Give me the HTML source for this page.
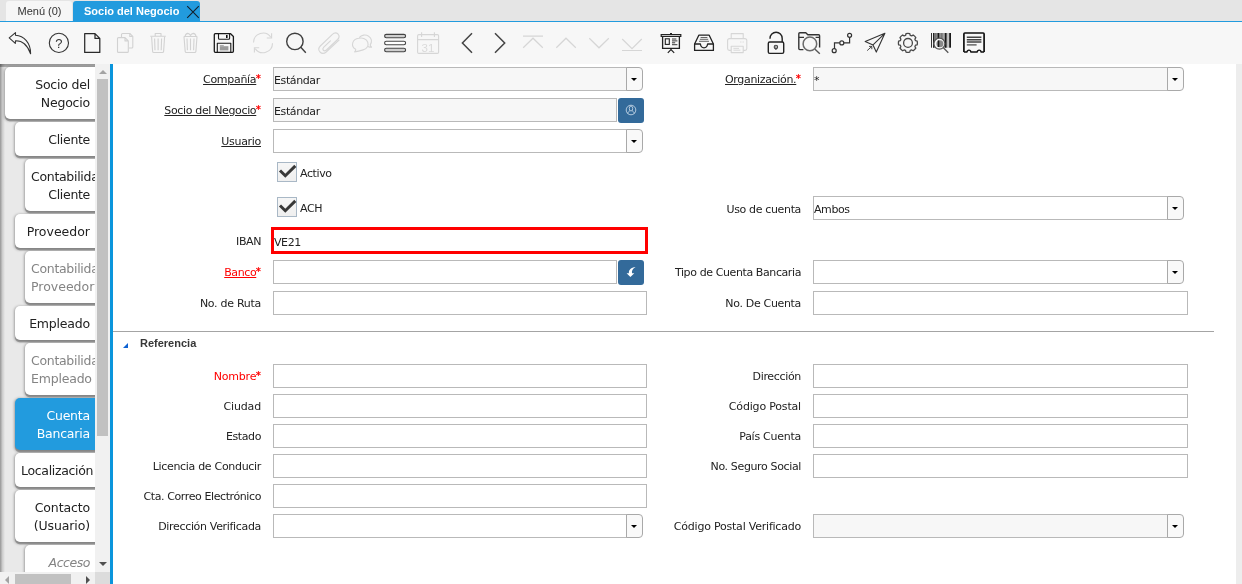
<!DOCTYPE html>
<html lang="es">
<head>
<meta charset="utf-8">
<title>Socio del Negocio</title>
<style>
html,body{margin:0;padding:0;}
body{width:1242px;height:584px;overflow:hidden;position:relative;background:#fff;font-family:"Liberation Sans",sans-serif;font-size:12px;color:#222;}
.abs{position:absolute;}
#form,#side,.tab,#tbsvg{will-change:transform;}
/* tab bar */
#tabbar{position:absolute;left:0;top:0;width:1242px;height:21px;background:#e5e5e5;}
#tabline{position:absolute;left:0;top:21px;width:1242px;height:1px;background:#229bde;}
.tab{position:absolute;top:1px;height:20px;line-height:21px;font-size:11px;border-radius:3px 3px 0 0;white-space:nowrap;}
#tab1{left:6px;width:66px;background:#f6f6f6;color:#333;}
#tab1 span{position:absolute;left:11.5px;top:0;}
#tab2{left:73px;width:127px;background:#229bde;color:#fff;font-weight:bold;}
#tab2 span{position:absolute;left:11px;top:0;}
#tab2 svg{position:absolute;left:113px;top:4px;}
/* toolbar */
#toolbar{position:absolute;left:0;top:22px;width:1242px;height:42px;background:#f7f7f7;}
.ic{position:absolute;top:8px;width:26px;height:26px;}
/* sidebar */
#side{position:absolute;left:0;top:64px;width:110px;height:520px;background:#e9e9e9;overflow:hidden;}
#vline{position:absolute;left:110px;top:64px;width:3px;height:520px;background:#0a95dc;}
.st{position:absolute;background:#fff;border-radius:5px 0 0 5px;font-family:"DejaVu Sans","Liberation Sans",sans-serif;font-size:12.5px;letter-spacing:-0.2px;line-height:18px;color:#222;white-space:nowrap;box-shadow:0 1px 2.5px 0.5px rgba(0,0,0,.3),0 2.5px 0.5px rgba(0,0,0,.2);}
.stx{position:absolute;left:6px;top:9px;}
.ln{text-align:right;white-space:nowrap;}
.ln.la{text-align:left;}
.sinset{position:absolute;left:0;top:0;width:95px;height:520px;background:linear-gradient(to bottom,rgba(0,0,0,.36),rgba(0,0,0,.28) 2.5px,rgba(0,0,0,0) 3.5px) top left/95px 4px no-repeat,linear-gradient(to right,rgba(0,0,0,.36),rgba(0,0,0,.12) 2.5px,rgba(0,0,0,0) 5px) top left/5px 520px no-repeat;pointer-events:none;}
.sbv{position:absolute;left:95px;top:0;width:15px;height:508px;background:#f1f1f1;}
.sbvt{position:absolute;left:97px;top:15px;width:11px;height:357px;background:#c1c1c1;}
.sbh{position:absolute;left:0;top:508px;width:95px;height:15px;background:#f1f1f1;}
.sbht{position:absolute;left:15px;top:510px;width:56px;height:11px;background:#c1c1c1;}
.sbc{position:absolute;left:95px;top:508px;width:15px;height:15px;background:#dcdcdc;}
.arr{position:absolute;width:0;height:0;border:4px solid transparent;}
.arr.up{left:98.5px;top:6px;border-bottom:4px solid #a3a3a3;border-top:0;}
.arr.dn{left:98.5px;top:498px;border-top:4px solid #505050;border-bottom:0;}
.arr.lf{left:5px;top:511.5px;border-right:4px solid #a3a3a3;border-left:0;}
.arr.rt{left:86px;top:511.5px;border-left:4px solid #505050;border-right:0;}
#rstrip{position:absolute;left:1236px;top:64px;width:6px;height:520px;background:#ededed;}
/* form */
.lbl{position:absolute;left:113px;width:148px;text-align:right;white-space:nowrap;font-family:"DejaVu Sans","Liberation Sans",sans-serif;font-size:11px;letter-spacing:-0.4px;line-height:16px;color:#222;}
.lbl.r{left:653px;}
.lbl u{text-decoration:underline;}
.req{color:#f00;font-weight:bold;font-size:10px;line-height:0;letter-spacing:0;position:relative;top:-1px;margin-left:-0.5px;}
.inp{position:absolute;box-sizing:border-box;height:24px;border:1px solid #b9b9b9;background:#fff;font-family:"DejaVu Sans","Liberation Sans",sans-serif;font-size:11px;letter-spacing:-0.4px;line-height:22px;padding-top:2px;padding-left:0;color:#222;white-space:nowrap;}
.ro{background:#f7f7f7;}
.cbb{position:absolute;box-sizing:border-box;width:17px;height:24px;border:1px solid #a9a9a9;border-radius:0 4px 4px 0;background:#f9f9f9;}
.btn{position:absolute;width:26px;height:25px;background:#336a9a;border-radius:3px;}
.btn svg{display:block;}
.chk{position:absolute;box-sizing:border-box;width:20px;height:20px;border:1px solid #a9b8c6;background:linear-gradient(#f6f6f6,#efefef);}
.chk svg{position:absolute;left:-1px;top:-1px;}
.ctx{position:absolute;font-family:"DejaVu Sans","Liberation Sans",sans-serif;font-size:11px;letter-spacing:-0.4px;line-height:16px;color:#222;white-space:nowrap;}
.iban{position:absolute;box-sizing:border-box;border:3px solid #ff0000;background:#fff;font-family:"DejaVu Sans","Liberation Sans",sans-serif;font-size:11px;letter-spacing:-0.4px;line-height:21px;padding-top:2px;color:#222;}
.sep{position:absolute;height:1px;background:#a4a4a4;}
.tri{position:absolute;width:0;height:0;border-left:5px solid transparent;border-bottom:5px solid #0f62d2;}
.grp{position:absolute;font-family:"Liberation Sans",sans-serif;font-weight:bold;font-size:11px;line-height:14px;color:#373737;}
.cbb:after{content:"";position:absolute;left:4px;top:10px;border:3px solid transparent;border-top:3px solid #000;border-bottom:0;}
</style>
</head>
<body>
<div id="tabbar"></div>
<div id="tabline"></div>
<div class="tab" id="tab1"><span>Menú (0)</span></div>
<div class="tab" id="tab2"><span>Socio del Negocio</span><svg width="14" height="14" viewBox="0 0 14 14"><path d="M1.2 1.2 L12.8 12.8 M12.8 1.2 L1.2 12.8" stroke="#13202b" stroke-width="1.1" fill="none"/></svg></div>
<div id="toolbar"></div><!--/toolbar-->
<!--tbsvg--><svg id="tbsvg" width="1000" height="64" viewBox="0 0 1000 64" style="position:absolute;left:0;top:0;" fill="none" stroke-linecap="butt" stroke-linejoin="miter">
<!-- 1 undo -->
<path d="M15.5 32.6 L9.2 37.9 L15.3 43.4 L15.5 40.8 C22 40.6 27.5 45 30.6 53.8 C30.8 43 24 35.5 15.5 35.2 Z" stroke="#333" stroke-width="1.1" stroke-linejoin="round"/>
<!-- 2 help -->
<circle cx="58.9" cy="42.9" r="9.6" stroke="#333" stroke-width="1.1"/>
<text x="58.9" y="47.6" font-family="Liberation Sans, sans-serif" font-size="13" text-anchor="middle" fill="#333" stroke="none">?</text>
<!-- 3 new -->
<path d="M84.7 33.6 H95 L99.8 38.4 V52.4 H84.7 Z M95 33.6 V38.4 H99.8" stroke="#2a2a2a" stroke-width="1.25" stroke-linejoin="round"/>
<!-- 4 copy (disabled) -->
<g stroke="#d2d2d2" stroke-width="1.1" stroke-linejoin="round">
<path d="M121.5 37 V34.5 Q121.5 33.5 122.5 33.5 H129.8 L132.8 36.5 V47 Q132.8 48 131.8 48 H129"/>
<path d="M129.8 33.5 V36.5 H132.8"/>
<path d="M117.5 38.6 Q117.5 37.6 118.5 37.6 H125 L128.3 40.9 V51.4 Q128.3 52.4 127.3 52.4 H118.5 Q117.5 52.4 117.5 51.4 Z M125 37.6 V40.9 H128.3"/>
</g>
<!-- 5 delete (disabled) -->
<g stroke="#d2d2d2" stroke-width="1.1" stroke-linejoin="round">
<path d="M150.3 36.3 H165.8 M155.2 36.3 V33.5 H161 V36.3"/>
<path d="M151.6 36.8 L152.6 51.4 Q152.7 52.5 153.8 52.5 H162.4 Q163.5 52.5 163.6 51.4 L164.6 36.8"/>
<path d="M154.6 38.5 L155 50.3 M158.1 38.5 V50.3 M161.6 38.5 L161.2 50.3"/>
</g>
<!-- 6 delete selection (disabled) -->
<g stroke="#d2d2d2" stroke-width="1.1" stroke-linejoin="round">
<path d="M184 36.8 L185.2 51.4 Q185.3 52.5 186.4 52.5 H194.7 Q195.8 52.5 195.9 51.4 L197 36.8"/>
<path d="M183.8 36.5 H197.2 M185 36.5 Q185.6 33.4 187.8 33.4 Q189.4 33.6 190.5 35.4 Q191.6 33.6 193.2 33.4 Q195.6 33.4 196 36.5"/>
<path d="M187 38.5 L187.4 50.3 M190.5 38.5 V50.3 M194 38.5 L193.6 50.3"/>
</g>
<!-- 7 save -->
<g stroke="#1a1a1a" stroke-width="1.3" stroke-linejoin="round">
<path d="M215.3 33.7 H230.6 L233.4 36.5 V51.3 Q233.4 52.4 232.3 52.4 H215.3 Q214.3 52.4 214.3 51.3 V34.7 Q214.3 33.7 215.3 33.7 Z"/>
<path d="M218.5 33.7 V38.3 Q218.5 39.3 219.5 39.3 H228.6 Q229.6 39.3 229.6 38.3 V33.7" stroke-width="1.1"/>
<path d="M217.3 52.4 V43.3 H230.8 V52.4" stroke-width="1.1"/>
</g>
<rect x="226" y="35" width="1.6" height="3" fill="#111"/>
<rect x="219.8" y="46.2" width="8.6" height="4.2" fill="#9a9a9a"/>
<rect x="219.8" y="45.2" width="4" height="1" fill="#9a9a9a"/>
<!-- 8 refresh (disabled) -->
<g stroke="#d6d6d6" stroke-width="1.1">
<path d="M253.5 42.5 A9.5 9.5 0 0 1 270.8 37.2"/>
<path d="M272.5 43.3 A9.5 9.5 0 0 1 255.2 48.6"/>
<path d="M271.6 33.2 V38 H266.8"/>
<path d="M254.4 52.6 V47.8 H259.2"/>
</g>
<!-- 9 find -->
<circle cx="294.9" cy="41.4" r="8.2" stroke="#404040" stroke-width="1.4"/>
<path d="M300.8 47.2 L305.8 52.8" stroke="#404040" stroke-width="1.4"/>
<!-- 10 attachment (disabled) -->
<g stroke="#d6d6d6" stroke-width="1.1" stroke-linecap="round">
<path d="M339 40.2 L326.2 52 Q322.8 54.8 320 52 Q317.3 49 320.3 46 L332.4 34.4 Q335.4 31.4 338 34 Q340.4 36.6 337.6 39.5 L326.4 50 Q324.4 51.6 323.2 50.2 Q322.2 48.8 323.8 47.2 L330.4 40.8"/>
</g>
<!-- 11 chat (disabled) -->
<g stroke="#d6d6d6" stroke-width="1.1" stroke-linejoin="round">
<path d="M358.6 38 A7 6 0 1 1 362.8 49.6 Q358 51 354.3 51.6 Q355.6 50.4 355.4 49 A7 6 0 0 1 358.6 38 Z" transform="translate(0.3,0.3)"/>
<path d="M359.2 37.6 A6.6 6 0 1 1 370.2 44.8 Q370.4 46.2 371.6 47.2 Q369.6 47.2 368 46.4"/>
</g>
<!-- 12 toggle/list -->
<g stroke="#444" stroke-width="1.1">
<rect x="384.6" y="34.4" width="21" height="3.4" rx="1.7" fill="#cfcfcf"/>
<rect x="384.6" y="41.3" width="21" height="3.4" rx="1.7" fill="#fff"/>
<rect x="384.6" y="48.3" width="21" height="3.4" rx="1.7" fill="#cfcfcf"/>
</g>
<!-- 13 calendar (disabled) -->
<g stroke="#d6d6d6" stroke-width="1.1">
<rect x="417.6" y="34.6" width="21" height="18.8" rx="1.2"/>
<path d="M417.6 39.6 H438.6 M421.6 32.2 V37 M434.4 32.2 V37"/>
</g>
<text x="428" y="51.6" font-family="Liberation Sans, sans-serif" font-size="11.5" text-anchor="middle" fill="#dadada" stroke="none">31</text>
<!-- 14,15 prev/next -->
<path d="M472 33.3 L462.4 43 L472 52.8" stroke="#444" stroke-width="1.5"/>
<path d="M495 33.3 L504.7 43 L495 52.8" stroke="#444" stroke-width="1.5"/>
<!-- 16-19 first/up/down/last (disabled) -->
<g stroke="#d6d6d6" stroke-width="1.2">
<path d="M523 36.2 H543 M523.2 47.8 L533 38.2 L542.8 47.8"/>
<path d="M556.3 47.8 L566 38.2 L575.8 47.8"/>
<path d="M589.3 38.2 L599 47.8 L608.8 38.2"/>
<path d="M622.2 39 L632 48.6 L641.8 39 M622 50.5 H642"/>
</g>
<!-- 20 report (presentation) -->
<g stroke="#222" stroke-width="1.2">
<path d="M661.2 34.6 H680.8 M661.2 36.5 H680.8 M661.2 34 V37 M680.8 34 V37"/>
<path d="M662.6 36.5 V48.3 H679.4 V36.5" stroke-width="1.3"/>
<path d="M671 48.3 V50 M667.8 52.8 L671 49.6 L674.2 52.8"/>
<rect x="665.3" y="38.8" width="4" height="5.6" stroke-width="1.1"/>
<path d="M672 39 H676.4 M672 40.9 H677.4 M672 42.8 H675.2 M672 44.7 H677.4" stroke-width="0.9"/>
<path d="M670 33.6 H672" stroke-width="1.2"/>
</g>
<!-- 21 archive / inbox -->
<g stroke="#222" stroke-width="1.3" stroke-linejoin="round">
<path d="M694.6 44 L698.8 35.2 H709.2 L713.4 44"/>
<path d="M694.6 44 H700.4 Q701 47.8 704 47.8 Q707 47.8 707.6 44 H713.4 V50.4 H694.6 Z"/>
<path d="M700.6 37.5 H707.4 M699.8 39.3 H708.2 M699 41.3 H709" stroke-width="0.9" stroke="#555"/>
</g>
<!-- 22 print (disabled) -->
<g stroke="#d6d6d6" stroke-width="1.1" stroke-linejoin="round">
<path d="M731.2 38.6 V33.6 H743.2 V38.6"/>
<path d="M731.2 50.4 H729.4 Q727.6 50.4 727.6 48.6 V40.6 Q727.6 38.6 729.6 38.6 H744.8 Q746.8 38.6 746.8 40.6 V48.6 Q746.8 50.4 745 50.4 H743.2"/>
<path d="M731.2 46.2 H743.2 V52.6 H731.2 Z"/>
<path d="M733.4 48.4 H739 M733.4 50.2 H740.4 M740.2 42 H741.4 M742.6 42 H743.8" stroke-width="0.9"/>
</g>
<!-- 23 lock (unlocked) -->
<g stroke="#222" stroke-width="1.4">
<rect x="768.3" y="42" width="15.4" height="11.4" rx="1.4"/>
<path d="M770 38.8 V38.4 A6.1 6.1 0 0 1 782.2 38.4 V42"/>
<circle cx="775.9" cy="47" r="1.7" stroke-width="1.1" stroke="#444"/>
<path d="M775.9 48.6 V50" stroke-width="1.1" stroke="#444"/>
</g>
<circle cx="775.9" cy="47" r="0.8" fill="#444"/>
<!-- 24 zoom across (folder + magnifier) -->
<g stroke="#333" stroke-width="1.4" stroke-linejoin="round">
<path d="M803.4 49.6 H799.8 Q798.8 49.6 798.8 48.6 V33.8 Q798.8 32.8 799.8 32.8 H805.8 L807.8 34.8 H818.6 Q819.6 34.8 819.6 35.8 V47.4"/>
<path d="M798.8 37.4 H804 M815.6 37.4 H819.6" stroke-width="1.2"/>
</g>
<circle cx="809.9" cy="43.9" r="6.8" stroke="#6a6a6a" stroke-width="1.5"/>
<path d="M815 49.2 L819.8 53.8" stroke="#555" stroke-width="1.4"/>
<!-- 25 workflow -->
<g stroke="#333" stroke-width="1.2">
<circle cx="849.6" cy="35.3" r="2"/>
<circle cx="841.8" cy="42.9" r="2"/>
<circle cx="834.2" cy="50.7" r="2"/>
<path d="M834.5 48.7 V42.9 H839.8 M843.8 42.9 H849.6 V37.3"/>
</g>
<!-- 26 request / send -->
<g stroke="#333" stroke-width="1.1" stroke-linejoin="round">
<path d="M884.9 33.3 L865.2 41.5 L873 44.9 L876.3 52.1 Z M884.9 33.3 L873 44.9"/>
<path d="M867.2 50.6 L871.8 46.4 M869 46.4 H871.8 V49.2" stroke-width="0.9"/>
</g>
<!-- 27 gear -->
<g stroke="#484848" stroke-width="1.3" stroke-linejoin="round">
<circle cx="908" cy="42.9" r="4.4"/>
<path d="M905.63 35.23 L906.01 33.59 A9.5 9.5 0 0 1 909.79 33.59 L910.17 35.23 A3 3 0 0 0 911.72 35.87 L913.14 34.98 A9.5 9.5 0 0 1 915.82 37.66 L914.93 39.08 A3 3 0 0 0 915.57 40.63 L917.21 41.01 A9.5 9.5 0 0 1 917.21 44.79 L915.57 45.17 A3 3 0 0 0 914.93 46.72 L915.82 48.14 A9.5 9.5 0 0 1 913.14 50.82 L911.72 49.93 A3 3 0 0 0 910.17 50.57 L909.79 52.21 A9.5 9.5 0 0 1 906.01 52.21 L905.63 50.57 A3 3 0 0 0 904.08 49.93 L902.66 50.82 A9.5 9.5 0 0 1 899.98 48.14 L900.87 46.72 A3 3 0 0 0 900.23 45.17 L898.59 44.79 A9.5 9.5 0 0 1 898.59 41.01 L900.23 40.63 A3 3 0 0 0 900.87 39.08 L899.98 37.66 A9.5 9.5 0 0 1 902.66 34.98 L904.08 35.87 A3 3 0 0 0 905.63 35.23 Z"/>
</g>
<!-- 28 product info (barcode + magnifier) -->
<rect x="933" y="33" width="14.6" height="14.7" fill="#8f8f8f"/>
<rect x="947.6" y="33" width="1.6" height="14.7" fill="#c4c4c4"/>
<rect x="931" y="33" width="1" height="14.7" fill="#333"/>
<rect x="933" y="33" width="1.2" height="14.7" fill="#222"/>
<rect x="937.6" y="33" width="1.6" height="14.7" fill="#1a1a1a"/>
<rect x="945" y="33" width="1.4" height="14.7" fill="#1a1a1a"/>
<rect x="949.2" y="33" width="1.8" height="14.7" fill="#1a1a1a"/>
<rect x="935.4" y="33" width="0.8" height="14.7" fill="#666"/>
<rect x="941.4" y="33" width="0.8" height="14.7" fill="#666"/>
<rect x="943.2" y="33" width="0.8" height="14.7" fill="#aaa"/>
<circle cx="939.4" cy="43.7" r="5.5" fill="#f7f7f7" stroke="#555" stroke-width="1.3"/>
<circle cx="939.9" cy="43.7" r="3.5" fill="#8a8a8a"/>
<rect x="937.8" y="40.4" width="1.5" height="6.6" fill="#1a1a1a"/>
<path d="M943.4 47.8 L948.3 52.7" stroke="#555" stroke-width="1.3"/>
<!-- 29 receipt -->
<g stroke="#111" stroke-width="1.7" stroke-linejoin="round">
<path d="M963.9 52 V34 Q963.9 33 964.9 33 H983.1 Q984.1 33 984.1 34 V52"/>
<path d="M963.9 52 H967 A1.9 1.9 0 0 1 970.8 52 H977.2 A1.9 1.9 0 0 1 981 52 H984.1" stroke-width="1.4"/>
</g>
<g stroke="#444" stroke-width="1.5">
<path d="M966.8 37.3 H981.4 M966.8 39.7 H981.4 M966.8 42.1 H981.4"/>
<path d="M966.8 44.9 H976.6" stroke-width="1.2"/>
</g>
</svg>
<!--/tbsvg-->
<div id="side">
<div class="st" style="left:5px;top:3px;width:95px;height:52px;color:#222;"><div class="stx" style="width:79px;"><div class="ln">Socio del</div><div class="ln">Negocio</div></div></div>
<div class="st" style="left:15px;top:58px;width:85px;height:34px;color:#222;"><div class="stx" style="width:69px;"><div class="ln" style="letter-spacing:-0.3px;">Cliente</div></div></div>
<div class="st" style="left:25px;top:95px;width:75px;height:52px;color:#222;"><div class="stx" style="width:59px;"><div class="ln la" style="letter-spacing:-0.3px;">Contabilidad</div><div class="ln" style="letter-spacing:-0.3px;">Cliente</div></div></div>
<div class="st" style="left:15px;top:150px;width:85px;height:34px;color:#222;"><div class="stx" style="width:69px;"><div class="ln" style="letter-spacing:0.0px;">Proveedor</div></div></div>
<div class="st" style="left:25px;top:187px;width:75px;height:52px;color:#848484;"><div class="stx" style="width:59px;"><div class="ln la" style="letter-spacing:-0.3px;">Contabilidad</div><div class="ln la" style="letter-spacing:0.0px;">Proveedor</div></div></div>
<div class="st" style="left:15px;top:242px;width:85px;height:34px;color:#222;"><div class="stx" style="width:69px;"><div class="ln">Empleado</div></div></div>
<div class="st" style="left:25px;top:279px;width:75px;height:52px;color:#848484;"><div class="stx" style="width:59px;"><div class="ln la" style="letter-spacing:-0.3px;">Contabilidad</div><div class="ln">Empleado</div></div></div>
<div class="st" style="left:15px;top:334px;width:85px;height:52px;color:#fff;background:#229bde;"><div class="stx" style="width:69px;"><div class="ln">Cuenta</div><div class="ln">Bancaria</div></div></div>
<div class="st" style="left:15px;top:389px;width:85px;height:34px;color:#222;"><div class="stx" style="width:69px;"><div class="ln la" style="letter-spacing:-0.32px;">Localización</div></div></div>
<div class="st" style="left:15px;top:426px;width:85px;height:52px;color:#222;"><div class="stx" style="width:69px;"><div class="ln" style="letter-spacing:-0.13px;">Contacto</div><div class="ln" style="letter-spacing:-0.12px;">(Usuario)</div></div></div>
<div class="st" style="left:25px;top:481px;width:75px;height:52px;color:#848484;font-style:italic;"><div class="stx" style="width:59px;"><div class="ln" style="letter-spacing:-0.45px;">Acceso</div></div></div>
<div class="sinset"></div>
<div class="sbv"></div><div class="sbvt"></div>
<div class="arr up"></div><div class="arr dn"></div>
<div class="sbh"></div><div class="sbht"></div><div class="sbc"></div>
<div class="arr lf"></div><div class="arr rt"></div>

</div><!--/side-->
<div id="vline"></div>
<div id="rstrip"></div>
<div id="form">
<div class="lbl" style="top:72px;letter-spacing:-0.3px;"><u>Compañía</u><span class="req">*</span></div>
<div class="inp ro" style="left:273px;top:67px;width:354px;">Estándar</div><div class="cbb" style="left:626px;top:67px;"></div>
<div class="lbl r" style="top:72px;letter-spacing:-0.33px;"><u>Organización.</u><span class="req">*</span></div>
<div class="inp ro" style="left:813px;top:67px;width:355px;">*</div><div class="cbb" style="left:1167px;top:67px;"></div>
<div class="lbl" style="top:103px;letter-spacing:-0.35px;"><u>Socio del Negocio</u><span class="req">*</span></div>
<div class="inp ro" style="left:273px;top:98px;width:344px;height:24px;">Estándar</div>
<div class="btn" style="left:618px;top:98px;"><svg width="26" height="25" viewBox="0 0 26 25"><g fill="none" stroke="#c9d9e8" stroke-width="0.85"><circle cx="13" cy="12" r="4.8"/><ellipse cx="13" cy="10.5" rx="1.7" ry="2.5"/><path d="M9.7 15.6C10 13.9 10.9 13.3 12 12.7M16.3 15.6C16 13.9 15.1 13.3 14 12.7"/></g></svg></div>
<div class="lbl" style="top:134px;letter-spacing:-0.3px;"><u>Usuario</u></div>
<div class="inp" style="left:273px;top:129px;width:354px;"></div><div class="cbb" style="left:626px;top:129px;"></div>
<div class="chk" style="left:277px;top:162px;"><svg width="20" height="20" viewBox="0 0 20 20"><path d="M3 8.5 L8.3 13.7 L18.3 3.9" fill="none" stroke="#383838" stroke-width="3" stroke-linejoin="miter"/></svg></div><div class="ctx" style="left:300px;top:166px;">Activo</div>
<div class="chk" style="left:277px;top:197px;"><svg width="20" height="20" viewBox="0 0 20 20"><path d="M3 8.5 L8.3 13.7 L18.3 3.9" fill="none" stroke="#383838" stroke-width="3" stroke-linejoin="miter"/></svg></div><div class="ctx" style="left:300px;top:201px;">ACH</div>
<div class="lbl r" style="top:202px;letter-spacing:-0.35px;">Uso de cuenta</div>
<div class="inp" style="left:813px;top:196px;width:355px;">Ambos</div><div class="cbb" style="left:1167px;top:196px;"></div>
<div class="lbl" style="top:234px;">IBAN</div>
<div class="iban" style="left:271px;top:227px;width:377px;height:27px;">VE21</div>
<div class="lbl" style="top:265px;color:#f00;"><u>Banco</u><span class="req">*</span></div>
<div class="inp" style="left:273px;top:260px;width:344px;height:24px;"></div>
<div class="btn" style="left:618px;top:260px;"><svg width="26" height="25" viewBox="0 0 26 25"><path d="M17.6 7.1 C13 7.6 10.6 10 10.9 13.2 L8.6 13.2 L12.4 16.9 L16.3 13.2 L14 13.2 C13.6 10.8 14.8 8.6 17.6 7.1 Z" fill="#fff"/></svg></div>
<div class="lbl r" style="top:265px;">Tipo de Cuenta Bancaria</div>
<div class="inp" style="left:813px;top:260px;width:355px;"></div><div class="cbb" style="left:1167px;top:260px;"></div>
<div class="lbl" style="top:296px;letter-spacing:-0.28px;">No. de Ruta</div>
<div class="inp" style="left:273px;top:291px;width:374px;height:24px;"></div>
<div class="lbl r" style="top:296px;letter-spacing:-0.33px;">No. De Cuenta</div>
<div class="inp" style="left:813px;top:291px;width:375px;height:24px;"></div>
<div class="sep" style="left:113px;top:331px;width:1101px;"></div>
<div class="tri" style="left:123px;top:343px;"></div>
<div class="grp" style="left:140px;top:336px;">Referencia</div>
<div class="lbl" style="top:369px;color:#f00;letter-spacing:-0.2px;">Nombre<span class="req">*</span></div>
<div class="inp" style="left:273px;top:364px;width:374px;height:24px;"></div>
<div class="lbl r" style="top:369px;letter-spacing:-0.33px;">Dirección</div>
<div class="inp" style="left:813px;top:364px;width:375px;height:24px;"></div>
<div class="lbl" style="top:399px;letter-spacing:-0.15px;">Ciudad</div>
<div class="inp" style="left:273px;top:394px;width:374px;height:24px;"></div>
<div class="lbl r" style="top:399px;letter-spacing:-0.18px;">Código Postal</div>
<div class="inp" style="left:813px;top:394px;width:375px;height:24px;"></div>
<div class="lbl" style="top:429px;">Estado</div>
<div class="inp" style="left:273px;top:424px;width:374px;height:24px;"></div>
<div class="lbl r" style="top:429px;letter-spacing:-0.26px;">País Cuenta</div>
<div class="inp" style="left:813px;top:424px;width:375px;height:24px;"></div>
<div class="lbl" style="top:459px;letter-spacing:-0.31px;">Licencia de Conducir</div>
<div class="inp" style="left:273px;top:454px;width:374px;height:24px;"></div>
<div class="lbl r" style="top:459px;letter-spacing:-0.36px;">No. Seguro Social</div>
<div class="inp" style="left:813px;top:454px;width:375px;height:24px;"></div>
<div class="lbl" style="top:489px;">Cta. Correo Electrónico</div>
<div class="inp" style="left:273px;top:484px;width:374px;height:24px;"></div>
<div class="lbl" style="top:519px;letter-spacing:-0.33px;">Dirección Verificada</div>
<div class="inp" style="left:273px;top:514px;width:354px;"></div><div class="cbb" style="left:626px;top:514px;"></div>
<div class="lbl r" style="top:519px;letter-spacing:-0.22px;">Código Postal Verificado</div>
<div class="inp ro" style="left:813px;top:514px;width:355px;"></div><div class="cbb" style="left:1167px;top:514px;"></div>
</div><!--/form-->
</body>
</html>
